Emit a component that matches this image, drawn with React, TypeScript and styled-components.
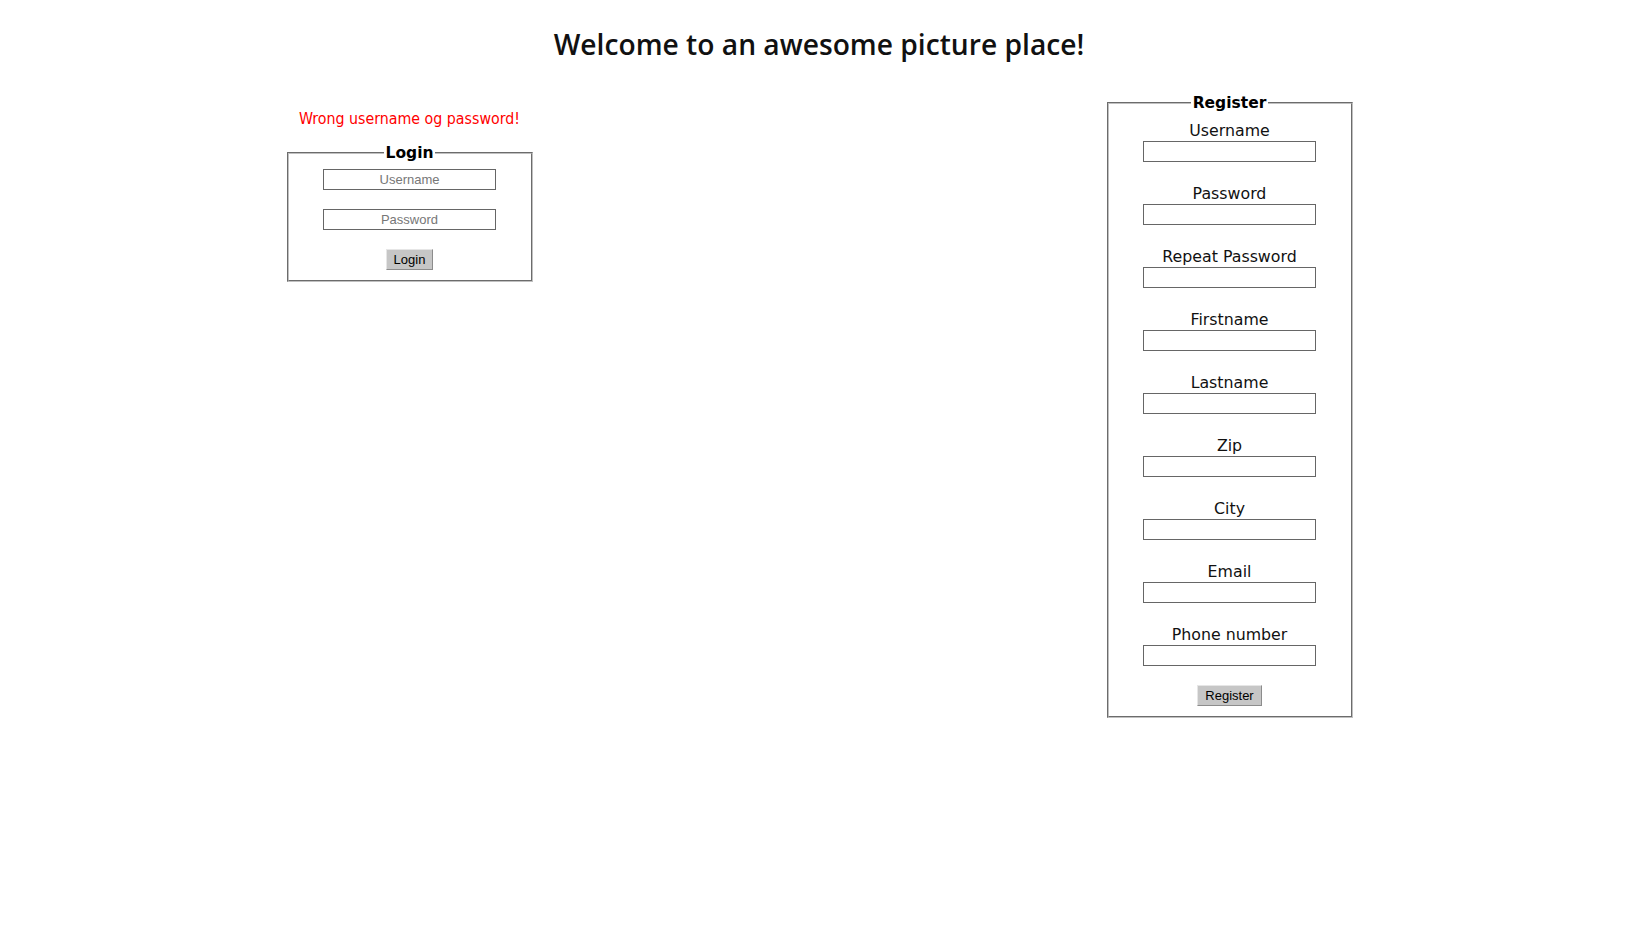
import React from "react";
import styled, { createGlobalStyle } from "styled-components";

const GlobalStyle = createGlobalStyle`
  html, body { margin: 0; padding: 0; background: #ffffff; }
  body { font-family: "DejaVu Sans", Verdana, sans-serif; color: #000; }
`;

const Page = styled.div`
  display: flex;
  flex-direction: column;
  width: 100%;
`;

const Title = styled.h1`
  margin: 24px 0 0;
  font-family: "Open Sans", "Noto Sans", sans-serif;
  font-weight: 600;
  font-size: 28.2px;
  line-height: 40px;
  text-align: center;
  color: #111;
`;

const Columns = styled.div`
  display: grid;
  grid-template-columns: 1fr 1fr;
  align-items: start;
  margin-top: 29px;
`;

const Column = styled.div<{ $top?: number; $shift?: number }>`
  display: flex;
  flex-direction: column;
  align-items: center;
  padding-top: ${(p) => p.$top ?? 0}px;
  padding-left: ${(p) => p.$shift ?? 0}px;
`;

const ErrorText = styled.p`
  margin: 0 0 15px;
  font-family: "DejaVu Sans Condensed", "DejaVu Sans", sans-serif;
  font-size: 15.8px;
  line-height: 19px;
  color: #ff0000;
`;

const Box = styled.fieldset<{ $padBottom: number }>`
  box-sizing: border-box;
  width: 246px;
  margin: 0;
  padding: 0 0 ${(p) => p.$padBottom}px;
  border: 2px groove rgb(192, 192, 192);
  display: flex;
  flex-direction: column;
  align-items: center;
`;

const Legend = styled.legend`
  margin: 0 auto;
  padding: 0 2px;
  font-family: "DejaVu Sans", Verdana, sans-serif;
  font-weight: bold;
  font-size: 15.5px;
  line-height: 20px;
`;

const Inner = styled.div<{ $padTop: number }>`
  display: flex;
  flex-direction: column;
  align-items: center;
  padding-top: ${(p) => p.$padTop}px;
`;

const Input = styled.input<{ $gap?: number }>`
  box-sizing: border-box;
  width: 173px;
  height: 21px;
  margin: 0 0 ${(p) => p.$gap ?? 0}px;
  padding: 0 4px;
  border: 1px solid #666666;
  background: #fff;
  font-family: "Liberation Sans", Arial, sans-serif;
  font-size: 13px;
  text-align: center;
  outline: none;
  &::placeholder { color: #777777; }
`;

const Field = styled.div`
  display: flex;
  flex-direction: column;
  align-items: center;
  margin-bottom: 22px;
  &:last-of-type { margin-bottom: 19px; }
`;

const Label = styled.label`
  font-family: "DejaVu Sans", Verdana, sans-serif;
  font-size: 15.8px;
  line-height: 20px;
  color: #111;
`;

const Button = styled.button`
  box-sizing: border-box;
  height: 21px;
  margin: 0;
  padding: 0 7px;
  background: #c6c6c6;
  border: 1px solid;
  border-color: #e6e6e6 #8c8c8c #8c8c8c #e6e6e6;
  font-family: "Liberation Sans", Arial, sans-serif;
  font-size: 13px;
  line-height: 19px;
  color: #000;
`;

const registerFields = [
  "Username",
  "Password",
  "Repeat Password",
  "Firstname",
  "Lastname",
  "Zip",
  "City",
  "Email",
  "Phone number",
];

export default function App() {
  return (
    <>
      <GlobalStyle />
      <Page>
        <Title>Welcome to an awesome picture place!</Title>
        <Columns>
          <Column $top={16}>
            <ErrorText>Wrong username og password!</ErrorText>
            <Box $padBottom={10}>
              <Legend>Login</Legend>
              <Inner $padTop={6}>
                <Input placeholder="Username" $gap={19} />
                <Input placeholder="Password" type="password" $gap={19} />
                <Button>Login</Button>
              </Inner>
            </Box>
          </Column>
          <Column $shift={2}>
            <Box $padBottom={10}>
              <Legend>Register</Legend>
              <Inner $padTop={8}>
                {registerFields.map((f) => (
                  <Field key={f}>
                    <Label>{f}</Label>
                    <Input type={f.includes("Password") ? "password" : "text"} />
                  </Field>
                ))}
                <Button>Register</Button>
              </Inner>
            </Box>
          </Column>
        </Columns>
      </Page>
    </>
  );
}
